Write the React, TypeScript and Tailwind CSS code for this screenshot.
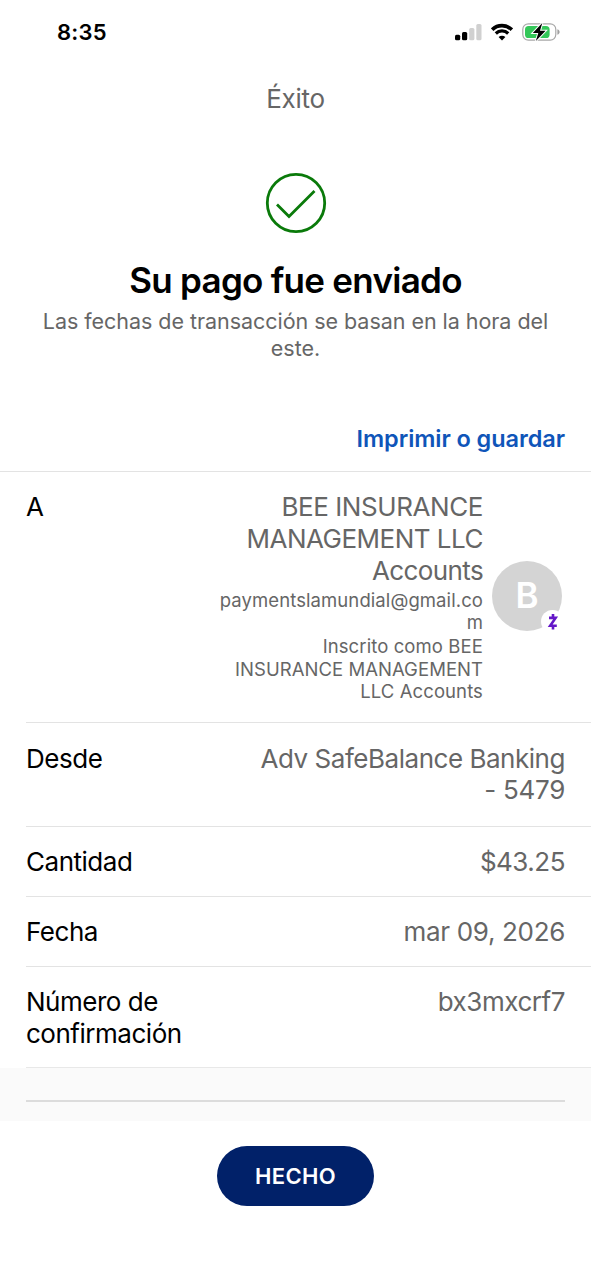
import React from "react";

interface DetailRow {
  id: string;
  label: string[];
  value: { text: string; className: string }[];
  className: string;
}

const DETAIL_ROWS: DetailRow[] = [
  {
    id: "from",
    label: ["Desde"],
    value: [
      { text: "Adv SafeBalance Banking", className: "tracking-[-0.47px]" },
      { text: "- 5479", className: "-mt-px tracking-[-0.3px]" },
    ],
    className: "h-[104px] pt-5",
  },
  {
    id: "amount",
    label: ["Cantidad"],
    value: [{ text: "$43.25", className: "tracking-[-0.5px]" }],
    className: "h-[70px] pt-[19px]",
  },
  {
    id: "date",
    label: ["Fecha"],
    value: [{ text: "mar 09, 2026", className: "tracking-[-0.33px]" }],
    className: "h-[70px] pt-[19px]",
  },
  {
    id: "confirmation",
    label: ["Número de", "confirmación"],
    value: [{ text: "bx3mxcrf7", className: "tracking-[-0.45px]" }],
    className: "h-[101px] pt-[19px]",
  },
];

function StatusBar() {
  return (
    <div className="flex h-16 items-center justify-between pr-[31px] pl-[57px]">
      <span className="text-[22px] leading-none font-semibold tracking-[0.2px]">8:35</span>
      <div className="flex items-center">
        <svg width="27" height="18" viewBox="0 0 27 18">
          <rect x="0" y="11.8" width="5.2" height="5.4" rx="1.5" fill="#000" />
          <rect x="7" y="9" width="5.2" height="8.2" rx="1.5" fill="#000" />
          <rect x="14.2" y="5" width="5.2" height="12.2" rx="1.5" fill="#d0d0d0" />
          <rect x="21.3" y="1" width="5.2" height="16.2" rx="1.5" fill="#d0d0d0" />
        </svg>
        <svg className="ml-[9px]" width="22" height="18" viewBox="0 0 22 18">
          <path d="M1.2 6.6a14 14 0 0 1 19.6 0" fill="none" stroke="#000" strokeWidth="3.6" />
          <path d="M4.8 10.5a8.8 8.8 0 0 1 12.4 0" fill="none" stroke="#000" strokeWidth="3.2" />
          <path d="M7.6 14a4.9 4.9 0 0 1 6.8 0L11 17.5z" fill="#000" />
        </svg>
        <svg className="ml-[9px]" width="38" height="20" viewBox="0 0 38 20">
          <rect x="0.8" y="1.8" width="33" height="16.4" rx="5.6" fill="#fff" stroke="#a8a8a8" strokeWidth="1.2" />
          <path d="M35.4 7.3c1.6.6 2.2 1.6 2.2 2.7s-.6 2.1-2.2 2.7z" fill="#a0a0a0" />
          <rect x="3" y="4" width="24.6" height="12" rx="3.6" fill="#34c759" />
          <path
            d="M20.3 1 10.8 11.1h5.5L13.8 19l9.8-10.2h-5.6z"
            fill="#000"
            stroke="#fff"
            strokeWidth="2"
            paintOrder="stroke"
          />
        </svg>
      </div>
    </div>
  );
}

function Avatar() {
  return (
    <div className="relative -mt-0.5 mr-[3px] ml-2.5 flex size-[70px] shrink-0 items-center justify-center rounded-full bg-[#d4d4d4]">
      <span className="pb-0.5 text-[35px] leading-none font-semibold text-white">B</span>
      <span className="absolute right-[-2px] bottom-[-2px] flex size-[23px] items-center justify-center rounded-full bg-white">
        <svg width="12" height="18" viewBox="0 0 12 18">
          <path
            d="M6 1v3.4M2 4.9h6.6L3.2 12.7h6.6M6 13v3.4"
            fill="none"
            stroke="#6417c8"
            strokeWidth="2.6"
          />
        </svg>
      </span>
    </div>
  );
}

export default function App() {
  return (
    <div className="flex h-[1280px] w-[591px] flex-col overflow-hidden bg-white font-['Inter',sans-serif] text-black">
      <StatusBar />

      <header className="flex h-[70px] items-center justify-center pb-0.5 text-[26px] tracking-[-0.3px] text-[#666]">
        Éxito
      </header>

      <section className="flex h-[337px] flex-col items-center pt-[38px]">
        <svg width="62" height="62" viewBox="0 0 62 62" fill="none" stroke="#0a7a0a">
          <circle cx="31" cy="31" r="28.7" strokeWidth="2.8" />
          <path d="M12 32.4 24 44.4 49.5 19" strokeWidth="2.8" />
        </svg>
        <h1 className="mt-6 text-[35px] leading-[44px] font-semibold tracking-[-0.73px] whitespace-nowrap">
          Su pago fue enviado
        </h1>
        <p className="mt-1.5 text-center text-[21.5px] leading-[27px] tracking-[-0.04px] whitespace-nowrap text-[#666]">
          Las fechas de transacción se basan en la hora del
          <br />
          este.
        </p>
        <button className="mt-[61px] mr-[26px] self-end text-[23.5px] leading-[32px] font-semibold tracking-[-0.07px] text-[#0f55b9]">
          Imprimir o guardar
        </button>
      </section>

      <main className="border-t border-[#e3e3e3] text-[26px] leading-8">
        <div className="flex h-[250px] pt-[19px] pr-[26px] pl-[26px]">
          <span>A</span>
          <div className="flex h-[212px] flex-1 items-center justify-end">
            <div className="-mr-px flex flex-col items-end whitespace-nowrap text-[#666]">
              <span className="tracking-[-0.42px]">BEE INSURANCE</span>
              <span className="tracking-[-0.5px]">MANAGEMENT LLC</span>
              <span className="tracking-[-0.62px]">Accounts</span>
              <div className="mt-0.5 flex flex-col items-end text-[18.5px] leading-[22px]">
                <span className="tracking-[0.09px]">paymentslamundial@gmail.co</span>
                <span>m</span>
              </div>
              <div className="mt-0.5 flex flex-col items-end text-[18.5px] leading-[22.4px]">
                <span className="tracking-[0.1px]">Inscrito como BEE</span>
                <span className="tracking-[0.04px]">INSURANCE MANAGEMENT</span>
                <span className="tracking-[0.1px]">LLC Accounts</span>
              </div>
            </div>
            <Avatar />
          </div>
        </div>

        {DETAIL_ROWS.map((row) => (
          <div
            key={row.id}
            className={`ml-[26px] flex justify-between border-t border-[#e3e3e3] pr-[26px] ${row.className}`}
          >
            <div className="flex flex-col tracking-[-0.48px]">
              {row.label.map((line) => (
                <span key={line}>{line}</span>
              ))}
            </div>
            <div className="flex flex-col items-end text-[#666]">
              {row.value.map((line) => (
                <span key={line.text} className={line.className}>
                  {line.text}
                </span>
              ))}
            </div>
          </div>
        ))}
        <div className="ml-[26px] h-px bg-[#e8e8e8]" />
      </main>

      <div className="h-[53px] bg-[#fafafa] px-[26px] pt-8">
        <div className="h-[2px] bg-[#dcdcdc]" />
      </div>

      <footer className="flex justify-center pt-[25px]">
        <button className="h-[60px] w-[157px] rounded-full bg-[#012169] text-[22px] font-semibold tracking-[0.4px] text-white">
          HECHO
        </button>
      </footer>
    </div>
  );
}
